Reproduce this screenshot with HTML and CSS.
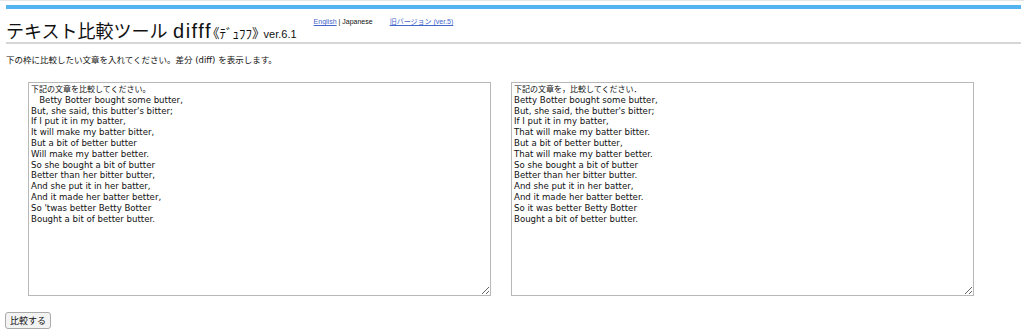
FILE: index.html
```html
<!DOCTYPE html>
<html lang="ja">
<head>
<meta charset="utf-8">
<title>difff</title>
<link rel="stylesheet" href="styles.css">
</head>
<body>
<div class="topline"></div>
<div class="page">
  <div class="bluebar"></div>
  <div class="header">
    <h1 class="title"><span class="jp">テキスト比較ツール</span> <span class="name">difff</span><span class="kana"><span class="br">《</span>ﾃﾞｭﾌﾌ<span class="br">》</span></span><span class="ver">ver.6.1</span></h1>
    <div class="langs"><a href="#">English</a> | Japanese</div>
    <div class="old"><a href="#">旧バージョン (ver.5)</a></div>
  </div>
  <hr class="rule">
  <p class="lead">下の枠に比較したい文章を入れてください。差分 (diff) を表示します。</p>
  <div class="areas">
<div class="box" contenteditable="true" role="textbox" aria-multiline="true"><span class="cjk">下記の文章を比較してください。</span>
   Betty Botter bought some butter,
But, she said, this butter's bitter;
If I put it in my batter,
It will make my batter bitter,
But a bit of better butter
Will make my batter better.
So she bought a bit of butter
Better than her bitter butter,
And she put it in her batter,
And it made her batter better,
So 'twas better Betty Botter
Bought a bit of better butter.</div>
<div class="box" contenteditable="true" role="textbox" aria-multiline="true"><span class="cjk">下記の文章を，比較してください．</span>
Betty Botter bought some butter,
But, she said, the butter's bitter;
If I put it in my batter,
That will make my batter bitter.
But a bit of better butter,
That will make my batter better.
So she bought a bit of butter
Better than her bitter butter.
And she put it in her batter,
And it made her batter better.
So it was better Betty Botter
Bought a bit of better butter.</div>
  </div>
  <button class="btn" type="button">比較する</button>
</div>
</body>
</html>
```
FILE: styles.css
```css
html, body {
  margin: 0;
  padding: 0;
  background: #fff;
}
body {
  font-family: "Liberation Sans", "Noto Sans CJK JP", sans-serif;
  color: #111;
}
.topline {
  height: 1px;
  background: #e6e6e6;
}
.page {
  padding: 0 3px 0 6px;
}
.bluebar {
  margin-top: 4px;
  height: 4px;
  background: #55b3ef;
}
.header {
  display: flex;
  align-items: flex-start;
  height: 33px;
}
.title {
  margin: 9px 0 0 0;
  font-family: "Liberation Sans", "Noto Sans CJK JP", sans-serif;
  font-weight: normal;
  font-size: 20px;
  line-height: 24px;
  white-space: nowrap;
}
.jp {
  font-family: "Noto Sans CJK JP", sans-serif;
  font-size: 18px;
}
.name {
  font-family: "Liberation Sans", sans-serif;
  font-size: 20px;
  letter-spacing: 1.5px;
}
.kana {
  font-family: "Noto Sans CJK JP", sans-serif;
  font-size: 13px;
  margin-left: 1px;
}
.br {
  font-feature-settings: "halt";
}
.ver {
  font-family: "Liberation Sans", sans-serif;
  font-size: 11px;
  margin-left: 5px;
}
.langs, .old {
  font-family: "Liberation Sans", "Noto Sans CJK JP", sans-serif;
  font-size: 7px;
  margin-top: 8px;
  line-height: 10px;
  white-space: nowrap;
}
.langs {
  margin-left: 17px;
}
.old {
  margin-left: 17px;
}
a {
  color: #4466cc;
}
.rule {
  margin: 0;
  border: 0;
  height: 2px;
  background: #d6d6d6;
}
.lead {
  margin: 10px 0 0 0;
  font-family: "DejaVu Sans", "Noto Sans CJK JP", sans-serif;
  font-size: 8.5px;
  line-height: 12px;
}
.areas {
  display: flex;
  gap: 20px;
  margin: 16px 0 0 22px;
}
.box {
  width: 463px;
  height: 214px;
  box-sizing: border-box;
  padding: 1px 2px;
  border: 1px solid #b8b8b8;
  font-family: "DejaVu Sans", sans-serif;
  font-size: 8.6px;
  line-height: 10.8px;
  color: #111;
  white-space: pre;
  overflow: auto;
  resize: both;
  outline: none;
}
.cjk {
  font-family: "Noto Sans CJK JP", sans-serif;
  font-size: 8px;
}
.btn {
  display: block;
  margin: 16px 0 0 -1px;
  padding: 2px 4px;
  font-family: "Noto Sans CJK JP", sans-serif;
  font-size: 9px;
  line-height: 11px;
  background: #f3f3f3;
  border: 1px solid #aaa;
  border-radius: 3px;
  color: #111;
}
```
